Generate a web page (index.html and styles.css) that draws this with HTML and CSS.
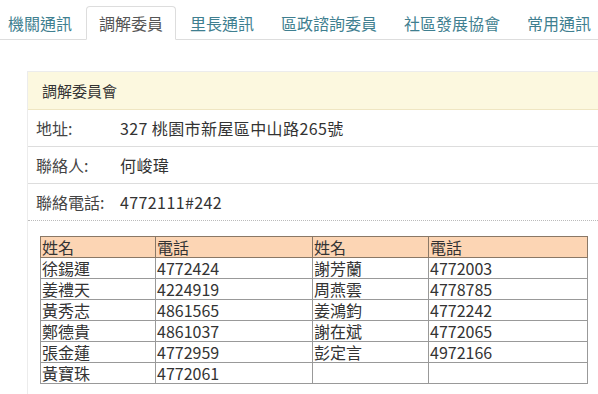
FILE: index.html
```html
<!DOCTYPE html>
<html lang="zh-Hant">
<head>
  <meta charset="UTF-8">
  <meta name="viewport" content="width=device-width, initial-scale=1.0">
  <title>調解委員</title>
  <link rel="stylesheet" href="styles.css">
</head>
<body>
  <!-- Tabs -->
  <ul class="tabs">
    <li class="tab">機關通訊</li>
    <li class="tab active">調解委員</li>
    <li class="tab">里長通訊</li>
    <li class="tab">區政諮詢委員</li>
    <li class="tab">社區發展協會</li>
    <li class="tab">常用通訊</li>
  </ul>

  <div class="content">
    <div class="panel">
      <div class="panel-heading">調解委員會</div>
      <div class="info-row">
        <span class="label">地址:</span>
        <span class="value">327 桃園市新屋區中山路265號</span>
      </div>
      <div class="info-row">
        <span class="label">聯絡人:</span>
        <span class="value">何峻瑋</span>
      </div>
      <div class="info-row last">
        <span class="label">聯絡電話:</span>
        <span class="value">4772111#242</span>
      </div>

      <!-- Members table -->
      <table class="members">
        <colgroup>
          <col class="c1"><col class="c2"><col class="c3"><col class="c4">
        </colgroup>
        <tr class="head">
          <td>姓名</td><td>電話</td><td>姓名</td><td>電話</td>
        </tr>
        <tr><td>徐鍚運</td><td>4772424</td><td>謝芳蘭</td><td>4772003</td></tr>
        <tr><td>姜禮天</td><td>4224919</td><td>周燕雲</td><td>4778785</td></tr>
        <tr><td>黃秀志</td><td>4861565</td><td>姜鴻鈞</td><td>4772242</td></tr>
        <tr><td>鄭德貴</td><td>4861037</td><td>謝在斌</td><td>4772065</td></tr>
        <tr><td>張金蓮</td><td>4772959</td><td>彭定言</td><td>4972166</td></tr>
        <tr><td>黃寶珠</td><td>4772061</td><td></td><td></td></tr>
      </table>
    </div>
  </div>
</body>
</html>
```

FILE: styles.css
```css
/* General body styling */
body {
  font-family: "Noto Sans CJK TC", "Noto Sans", sans-serif;
  margin: 0;
  padding: 0;
  color: #333;
  background-color: #fff;
  overflow: hidden;
}

/* Tab bar */
.tabs {
  display: flex;
  list-style: none;
  margin: 0 0 0 -5px;
  padding: 6px 0 0 0;
  border-bottom: 1px solid #ddd;
  white-space: nowrap;
}

.tab {
  flex-shrink: 0;
  padding: 0 12px;
  margin-right: 1px;
  margin-bottom: -1px;
  border: 1px solid transparent;
  border-radius: 4px 4px 0 0;
  font-size: 16px;
  line-height: 32px;
  color: #3f7f90;
}

.tab.active {
  color: #555;
  background-color: #fff;
  border-color: #ddd;
  border-bottom-color: #fff;
}

/* Content panel */
.content {
  padding: 31px 0 0 27px;
}

.panel {
  margin-right: -20px;
  min-height: 330px;
  border: 1px solid #ececec;
  border-right: none;
  border-bottom: none;
}

.panel-heading {
  height: 37px;
  line-height: 38px;
  padding-left: 14px;
  font-size: 15px;
  color: #333;
  background-color: #fcf8df;
  border-bottom: 1px solid #efe6c2;
}

.info-row {
  display: flex;
  height: 36px;
  line-height: 37px;
  padding-left: 8px;
  font-size: 16px;
  border-bottom: 1px solid #ddd;
}

.info-row.last {
  border-bottom: 1px dotted #bbb;
}

.label {
  width: 84px;
  color: #444;
}

.value {
  color: #333;
  letter-spacing: 0.4px;
}

/* Members table */
.members {
  margin: 15px 0 0 12px;
  width: 547px;
  border-collapse: collapse;
  border: 1px solid #222;
  font-size: 16px;
  table-layout: fixed;
}

.members .c1 { width: 115px; }
.members .c2 { width: 157px; }
.members .c3 { width: 116px; }
.members .c4 { width: 159px; }

.members td {
  height: 20px;
  padding: 0 1px;
  line-height: 20px;
  border: 1px solid #999;
  color: #333;
  white-space: nowrap;
}

.members .head td {
  background-color: #fcd5b4;
  border-color: #8a7866;
}
```
